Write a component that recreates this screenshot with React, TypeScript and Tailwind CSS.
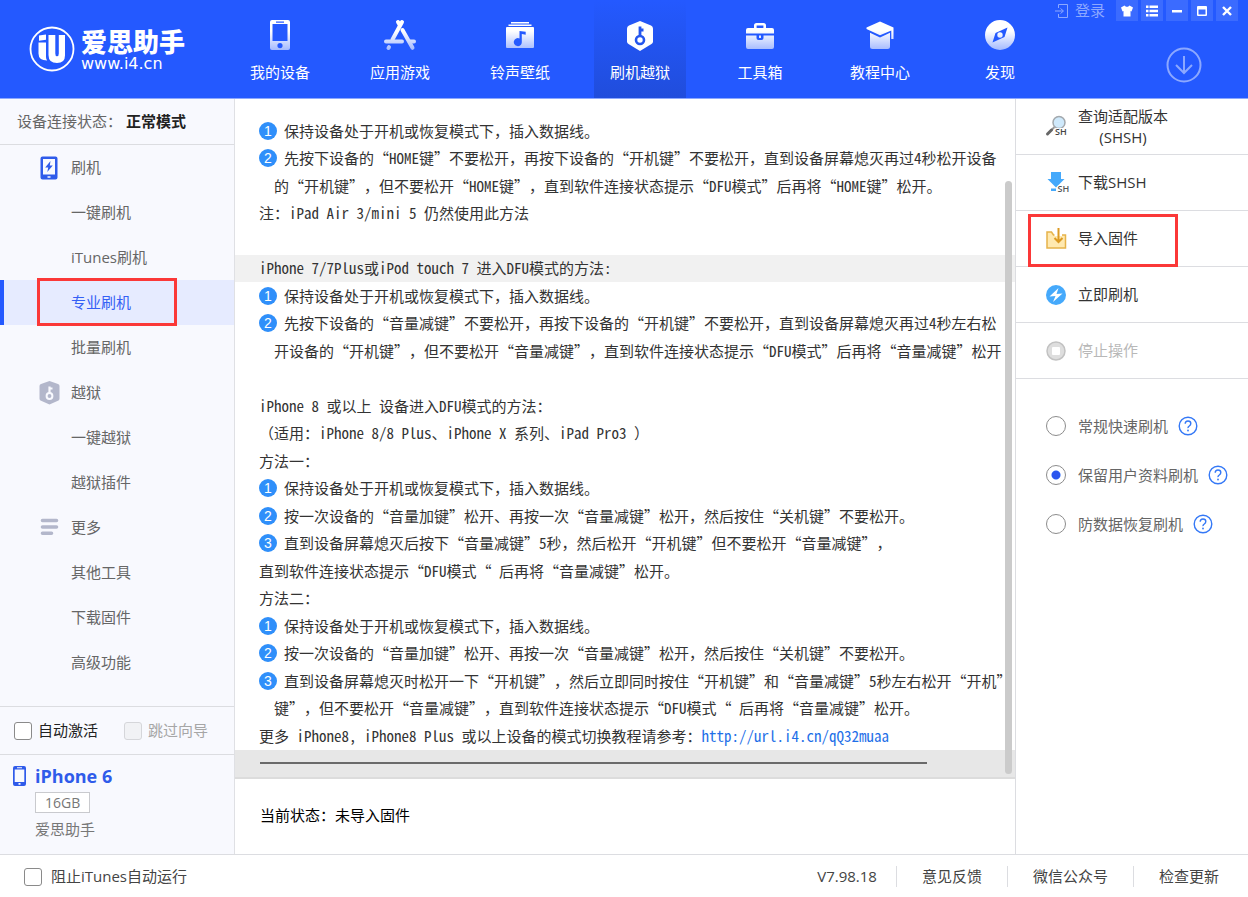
import type { ReactNode } from "react";

const uiFont = "font-['Open_Sans','Noto_Sans_CJK_SC',sans-serif]";
const docFont = "font-['Noto_Sans_Mono_CJK_SC','Noto_Sans_CJK_SC',monospace]";

function NavSvg({ children }: { children: ReactNode }) {
  return (
    <svg viewBox="0 0 36 36" className="size-9" fill="url(#navFade)" aria-hidden="true">
      {children}
    </svg>
  );
}

const navItems: { label: string; active?: boolean; icon: ReactNode }[] = [
  {
    label: "我的设备",
    icon: (
      <NavSvg>
        <path
          fillRule="evenodd"
          d="M10 3h16a2 2 0 0 1 2 2v26a2 2 0 0 1-2 2H10a2 2 0 0 1-2-2V5a2 2 0 0 1 2-2Zm.5 4v17h15V7ZM14 4.5v1.2h8V4.5ZM18 26a2.6 2.6 0 1 0 0 5.200a2.600 2.600 0 0 0 0-5.200Z"
        />
      </NavSvg>
    ),
  },
  {
    label: "应用游戏",
    icon: (
      <NavSvg>
        <g fill="none" stroke="url(#navFade)" strokeWidth="4" strokeLinecap="round">
          <path d="M20 5 10.500 22.500" />
          <path d="M6.500 31 7 30.200" />
          <path d="M16 5 17.500 7.500M20.500 13 30.500 30.800" />
          <path d="M4 24.500 20 24.600M28 24.500h4" />
        </g>
      </NavSvg>
    ),
  },
  {
    label: "铃声壁纸",
    icon: (
      <NavSvg>
        <rect x="9" y="5" width="18" height="1.500" />
        <rect x="6.500" y="7.500" width="23" height="1.500" />
        <path
          fillRule="evenodd"
          d="M5 10h26a1 1 0 0 1 1 1v19a1 1 0 0 1-1 1H5a1 1 0 0 1-1-1V11a1 1 0 0 1 1-1Zm12.500 4v7.500a4 4 0 1 0 2.300 3.600V17l3.900.800V14.800Z"
        />
      </NavSvg>
    ),
  },
  {
    label: "刷机越狱",
    active: true,
    icon: (
      <svg viewBox="0 0 36 36" className="size-9" aria-hidden="true">
        <path fill="#fff" d="M18 4 29 8.500Q31 9.400 31 11.500v13q0 1.600-1.500 2.600L18 34 6.500 27.100Q5 26 5 24.500v-13Q5 9.400 7 8.500Z" />
        <circle cx="18" cy="23" r="4" fill="none" stroke="#2456ee" strokeWidth="2.600" />
        <path d="M18 19V9.500M18 13h3.500" fill="none" stroke="#2456ee" strokeWidth="2.800" />
      </svg>
    ),
  },
  {
    label: "工具箱",
    icon: (
      <NavSvg>
        <path
          fillRule="evenodd"
          d="M12 11V8.500A2.500 2.500 0 0 1 14.500 6h7A2.500 2.500 0 0 1 24 8.500V11h6a2 2 0 0 1 2 2v3.500H4V13a2 2 0 0 1 2-2Zm2.600 0h6.800V8.600h-6.800Z"
        />
        <path
          fillRule="evenodd"
          d="M4 18.500h10.500V21a2 2 0 0 0 2 2h3a2 2 0 0 0 2-2v-2.500H32V30a2 2 0 0 1-2 2H6a2 2 0 0 1-2-2Zm13 0h2V21h-2Z"
        />
      </NavSvg>
    ),
  },
  {
    label: "教程中心",
    icon: (
      <NavSvg>
        <path d="M18 4.500 31.500 10.500V22H29.300V13.500L18 18.300 4.500 12v-1.500Z" />
        <path d="M8 15.800 18 20.600 28 15.800V29.500a2.500 2.500 0 0 1-2.500 2.500h-15A2.500 2.500 0 0 1 8 29.500Z" />
      </NavSvg>
    ),
  },
  {
    label: "发现",
    icon: (
      <NavSvg>
        <path
          fillRule="evenodd"
          d="M18 3a15 15 0 1 0 0 30a15 15 0 0 0 0-30Zm7.500 7.500-3 9.500-12 5.500 3-9.500ZM18 15.300a2.700 2.700 0 1 0 0 5.400a2.700 2.700 0 0 0 0-5.400Z"
        />
      </NavSvg>
    ),
  },
];

const windowButtons: { label: string; icon: ReactNode }[] = [
  { label: "换肤", icon: <path d="M4.500 1.500 6 2.700h2L9.500 1.500 13 3.500 11.500 7.500l-1-.5V12.500h-7V7L2.500 7.500 1 3.500Z" /> },
  { label: "菜单", icon: <path d="M1 1.500h2.500V4H1Zm3.500 0H13V4H4.500ZM1 5.700h2.500v2.500H1Zm3.500 0H13v2.500H4.500ZM1 10h2.500v2.500H1Zm3.500 0H13v2.500H4.500Z" /> },
  { label: "最小化", icon: <path d="M2 6h10v2.500H2Z" /> },
  { label: "最大化", icon: <path fillRule="evenodd" d="M3 2h8a1 1 0 0 1 1 1v8a1 1 0 0 1-1 1H3a1 1 0 0 1-1-1V3a1 1 0 0 1 1-1Zm.500 3.500v5h7v-5Z" /> },
  { label: "关闭", icon: <path d="m3 3 8 8m0-8-8 8" stroke="#fff" strokeWidth="2.400" /> },
];

function Header() {
  return (
    <header className="flex h-[99px] shrink-0 border-b border-[#8ca8ff] bg-[#2459ff] text-white">
      <svg className="absolute size-0" aria-hidden="true">
        <defs>
          <linearGradient id="navFade" gradientUnits="userSpaceOnUse" x1="0" y1="14" x2="0" y2="34">
            <stop offset="0" stopColor="#fff" />
            <stop offset="1" stopColor="#9fb6ff" />
          </linearGradient>
        </defs>
      </svg>
      <div className="flex w-[234px] shrink-0 gap-1.5 pt-[26px] pl-[29px]">
        <svg viewBox="0 0 46 46" className="size-[46px]" aria-label="i4" role="img">
          <circle cx="23" cy="23" r="21.500" fill="none" stroke="#fff" strokeWidth="1.800" />
          <path fill="#fff" d="M10 9.500 17 8.500v5.200l-7 1ZM9.500 16.500H17V31q0 2 1.200 3.500Q9.500 34.500 9.500 27.500Z" />
          <path fill="#fff" d="M19.500 9h6.800v18.500q0 2.800 1.700 2.800 1.800 0 1.800-2.800V9H36v20.500q0 7.500-8 7.500-8.500 0-8.500-8Z" />
        </svg>
        <div className="font-['DejaVu_Sans','Noto_Sans_CJK_SC',sans-serif]">
          <div className="font-['Noto_Sans_CJK_SC',sans-serif] text-[26px] leading-[29px] font-black">爱思助手</div>
          <div className="text-base leading-[18px]">www.i4.cn</div>
        </div>
      </div>
      <nav className="flex gap-7">
        {navItems.map((item) => (
          <button
            key={item.label}
            className={
              item.active
                ? "flex w-[92px] flex-col items-center gap-[9px] bg-linear-to-b from-[#2459ff] to-[#204ddc] pt-[17px]"
                : "flex w-[92px] flex-col items-center gap-[9px] pt-[17px]"
            }
          >
            {item.icon}
            <span className="leading-5">{item.label}</span>
          </button>
        ))}
      </nav>
      <div className="ml-auto flex flex-col items-end gap-[26px] pr-2.5">
        <div className="flex gap-[3px]">
          <button className="mr-2 flex h-[21px] items-center gap-1.5 text-[#8ca8ff]">
            <svg viewBox="0 0 14 14" className="size-3.5" fill="none" stroke="currentColor" aria-hidden="true">
              <path d="M3.500 4V.500h9v13h-9V10M0 7h8M5.500 4.500 8.500 7 5.500 9.500" />
            </svg>
            登录
          </button>
          {windowButtons.map((b) => (
            <button key={b.label} aria-label={b.label} className="flex h-[21px] w-[22px] items-center justify-center bg-[#3b6bff]">
              <svg viewBox="0 0 14 14" className="size-3.5" fill="#fff" aria-hidden="true">
                {b.icon}
              </svg>
            </button>
          ))}
        </div>
        <button aria-label="下载" className="mr-9">
          <svg viewBox="0 0 36 36" className="size-9" fill="none" stroke="#8ca8ff" strokeWidth="2" aria-hidden="true">
            <circle cx="18" cy="18" r="16.500" />
            <path d="M18 9v17M10 18l8 8 8-8" />
          </svg>
        </button>
      </div>
    </header>
  );
}

function Highlight({ className }: { className: string }) {
  return <span className={"pointer-events-none absolute border-3 border-[#fb3838] " + className} />;
}

const flashIcon = (
  <svg viewBox="0 0 24 24" className="size-6" aria-hidden="true">
    <path
      fill="#2f5bea"
      fillRule="evenodd"
      d="M5.500.500h13a2 2 0 0 1 2 2v19a2 2 0 0 1-2 2h-13a2 2 0 0 1-2-2v-19a2 2 0 0 1 2-2ZM6 3v15.500h12V3Zm4.500 17.200v1.600h3v-1.600Z"
    />
    <path fill="#2f5bea" d="m13.500 5-5.300 6.500h3L10.300 16l5.500-6.500h-3Z" />
  </svg>
);
const shieldIcon = (
  <svg viewBox="0 0 24 24" className="size-6" aria-hidden="true">
    <path fill="#b3b7cb" d="M12.500 0 21 3q1.500.600 1.500 2v12.500q0 1.300-1 2L12.500 23.500 3.500 19.500q-1-.700-1-2V5Q2.500 3.500 4 3Z" />
    <circle cx="12.500" cy="15" r="2.900" fill="none" stroke="#f8f9fe" strokeWidth="2" />
    <path d="M12.500 12V5.500M12.500 7.500h3" stroke="#f8f9fe" strokeWidth="2.200" fill="none" />
  </svg>
);
const listIcon = (
  <svg viewBox="0 0 24 24" className="size-6" stroke="#b3b7cb" strokeWidth="3.600" strokeLinecap="round" aria-hidden="true">
    <path d="M5.500 4.500h14M5.500 11h14M5.500 17.300h9" />
  </svg>
);

const menu: { label: string; icon?: ReactNode; active?: boolean }[] = [
  { label: "刷机", icon: flashIcon },
  { label: "一键刷机" },
  { label: "iTunes刷机" },
  { label: "专业刷机", active: true },
  { label: "批量刷机" },
  { label: "越狱", icon: shieldIcon },
  { label: "一键越狱" },
  { label: "越狱插件" },
  { label: "更多", icon: listIcon },
  { label: "其他工具" },
  { label: "下载固件" },
  { label: "高级功能" },
];

const checkbox =
  "size-[18px] appearance-none rounded-[3px] border border-[#8a8a8a] bg-white checked:bg-[#2459ff] disabled:border-[#d5d6da] disabled:bg-[#f1f2f5]";

function Sidebar() {
  return (
    <aside className="flex w-[235px] shrink-0 flex-col border-r border-[#dfe0e4] bg-[#f8f9fe]">
      <div className="flex h-[46px] items-center gap-1 border-b border-[#dcdde1] pl-[17px] text-[#666]">
        设备连接状态：<strong className="text-[#222]">正常模式</strong>
      </div>
      <nav className="flex-1 pb-5">
        {menu.map((item) => (
          <button
            key={item.label}
            className={
              item.active
                ? "relative flex h-[45px] w-full items-center gap-2.5 border-l-4 border-[#2459ff] bg-[#e6ebff] pl-[33px] text-[#3560f5]"
                : "flex h-[45px] w-full items-center gap-2.5 pl-[37px] text-[#666]"
            }
          >
            <span className="size-6">{item.icon}</span>
            {item.label}
            {item.active && <Highlight className="-top-0.5 -bottom-px left-[33px] w-[140px]" />}
          </button>
        ))}
      </nav>
      <div className="flex h-[49px] items-center gap-[26px] border-y border-[#dcdde1] pl-3.5">
        <label className="flex items-center gap-1.5 text-[#222]">
          <input type="checkbox" className={checkbox} />
          自动激活
        </label>
        <label className="flex items-center gap-1.5 text-[#a6a6a6]">
          <input type="checkbox" disabled className={checkbox} />
          跳过向导
        </label>
      </div>
      <div className="flex h-[99px] gap-2 pt-2.5 pl-3">
        <svg viewBox="0 0 15 22" className="h-[22px] w-[15px]" aria-hidden="true">
          <path
            fill="#2f5bea"
            fillRule="evenodd"
            d="M3 1h9a2 2 0 0 1 2 2v16a2 2 0 0 1-2 2H3a2 2 0 0 1-2-2V3a2 2 0 0 1 2-2Zm-.300 3.500V17h9.600V4.500ZM5 2.300v.900h5v-.900ZM6.500 18v1.700h2V18Z"
          />
        </svg>
        <div className="flex flex-col items-start text-[#777]">
          <strong className="text-lg leading-[22px] text-[#2f5bea]">iPhone 6</strong>
          <span className="mt-[5px] flex h-[21px] items-center border border-[#c9cace] bg-white px-[9px] text-sm leading-4">16GB</span>
          <span className="mt-1.5 leading-5">爱思助手</span>
        </div>
      </div>
    </aside>
  );
}

type Line = { n?: number; text?: string; indent?: boolean; shade?: boolean; link?: string };

const lines: Line[] = [
  { n: 1, text: "保持设备处于开机或恢复模式下，插入数据线。" },
  { n: 2, text: "先按下设备的“HOME键”不要松开，再按下设备的“开机键”不要松开，直到设备屏幕熄灭再过4秒松开设备" },
  { indent: true, text: "的“开机键”，但不要松开“HOME键”，直到软件连接状态提示“DFU模式”后再将“HOME键”松开。" },
  { text: "注：iPad Air 3/mini 5 仍然使用此方法" },
  {},
  { shade: true, text: "iPhone 7/7Plus或iPod touch 7 进入DFU模式的方法:" },
  { n: 1, text: "保持设备处于开机或恢复模式下，插入数据线。" },
  { n: 2, text: "先按下设备的“音量减键”不要松开，再按下设备的“开机键”不要松开，直到设备屏幕熄灭再过4秒左右松" },
  { indent: true, text: "开设备的“开机键”，但不要松开“音量减键”，直到软件连接状态提示“DFU模式”后再将“音量减键”松开" },
  {},
  { text: "iPhone 8 或以上 设备进入DFU模式的方法：" },
  { text: "（适用：iPhone 8/8 Plus、iPhone X 系列、iPad Pro3 ）" },
  { text: "方法一：" },
  { n: 1, text: "保持设备处于开机或恢复模式下，插入数据线。" },
  { n: 2, text: "按一次设备的“音量加键”松开、再按一次“音量减键”松开，然后按住“关机键”不要松开。" },
  { n: 3, text: "直到设备屏幕熄灭后按下“音量减键”5秒，然后松开“开机键”但不要松开“音量减键”，" },
  { text: "直到软件连接状态提示“DFU模式“ 后再将“音量减键”松开。" },
  { text: "方法二：" },
  { n: 1, text: "保持设备处于开机或恢复模式下，插入数据线。" },
  { n: 2, text: "按一次设备的“音量加键”松开、再按一次“音量减键”松开，然后按住“关机键”不要松开。" },
  { n: 3, text: "直到设备屏幕熄灭时松开一下“开机键”，然后立即同时按住“开机键”和“音量减键”5秒左右松开“开机”" },
  { indent: true, text: "键”，但不要松开“音量减键”，直到软件连接状态提示“DFU模式“ 后再将“音量减键”松开。" },
  { text: "更多 iPhone8, iPhone8 Plus 或以上设备的模式切换教程请参考：", link: "http://url.i4.cn/qQ32muaa" },
];

function rowClass(line: Line) {
  if (line.shade) return "flex min-h-6 flex-1 items-center bg-[#f1f1f1] pl-6";
  if (line.indent) return "flex min-h-6 flex-1 items-center pl-[39px]";
  return "flex min-h-6 flex-1 items-center pl-6";
}

function Instructions() {
  return (
    <main className="flex min-w-0 flex-1 flex-col">
      <div
        className={
          "relative flex flex-1 flex-col overflow-hidden border-b-2 border-[#dcdcdc] pt-[18px] leading-5 whitespace-pre text-[#333] [text-spacing-trim:space-all] " +
          docFont
        }
      >
        {lines.map((line, i) => (
          <div key={i} className={rowClass(line)}>
            {line.n && (
              <span className="mr-[7px] flex size-[18px] shrink-0 items-center justify-center rounded-full bg-[#2f8ffa] font-['Liberation_Sans',sans-serif] text-sm leading-none text-white">
                {line.n}
              </span>
            )}
            <span>{line.text}</span>
            {line.link && (
              <a href={line.link} className="text-[#1e6fe8]">
                {line.link}
              </a>
            )}
          </div>
        ))}
        <div className="flex min-h-6 flex-1 items-center bg-[#e7e7e7] pr-[88px] pl-[25px]">
          <hr className="w-full border-t-2 border-[#6a6a6a]" />
        </div>
        <div className="absolute top-[82px] right-[3px] bottom-[3px] w-[7px] rounded-full bg-[#cbcbcb]" />
      </div>
      <div className="flex h-[75px] items-center pb-0.5 pl-[25px] text-black">当前状态：未导入固件</div>
    </main>
  );
}

const actions: { lines: string[]; icon: ReactNode; disabled?: boolean; marked?: boolean }[] = [
  {
    lines: ["查询适配版本", "(SHSH)"],
    icon: (
      <>
        <path d="m8.500 11-3 3" stroke="#9a9a9a" strokeWidth="2" />
        <path d="m5.500 14-4 4" stroke="#666" strokeWidth="3" strokeLinecap="round" />
        <circle cx="13" cy="6.500" r="6" fill="#cfe9fb" stroke="#a3a9ae" strokeWidth="1.500" />
        <text x="9" y="19" fontSize="9" fontWeight="600" fill="#444" stroke="#fff" strokeWidth="2" paintOrder="stroke">SH</text>
      </>
    ),
  },
  {
    lines: ["下载SHSH"],
    icon: (
      <>
        <path d="M5 0h10v7h3.500l-8.500 8.500L1.500 7H5Z" fill="#45a9fb" />
        <path d="M5 16.500h5V19H5Z" fill="#45a9fb" />
        <text x="11.500" y="20" fontSize="9" fontWeight="600" fill="#555" stroke="#fff" strokeWidth="2" paintOrder="stroke">SH</text>
      </>
    ),
  },
  {
    lines: ["导入固件"],
    marked: true,
    icon: (
      <>
        <path d="M1 4h4.500l2 3H19.500v13H1Z" fill="#ffe9b0" stroke="#e6b34a" strokeWidth="1.500" />
        <path d="M8.500 8V6H16v2Z" fill="#fff" />
        <path d="M12.500 0v14M8.500 10l4 4 4-4" fill="none" stroke="#dc9a22" strokeWidth="2" />
      </>
    ),
  },
  {
    lines: ["立即刷机"],
    icon: (
      <>
        <circle cx="10" cy="11" r="10" fill="#45a9fb" />
        <path d="M12.500 4 3.500 12.500l6-.500L7 18l9.500-8.500-6 .500Z" fill="#fff" />
      </>
    ),
  },
  {
    lines: ["停止操作"],
    disabled: true,
    icon: (
      <>
        <circle cx="10" cy="11" r="9" fill="#dedede" stroke="#c2c2c2" strokeWidth="1.500" />
        <rect x="6" y="7" width="8" height="8" rx="1" fill="#fff" />
      </>
    ),
  },
];

const modes = ["常规快速刷机", "保留用户资料刷机", "防数据恢复刷机"];

function ActionPanel() {
  return (
    <aside className="w-[233px] shrink-0 border-l border-[#dcdde1]">
      {actions.map((a) => (
        <button
          key={a.lines[0]}
          disabled={a.disabled}
          className="relative flex h-14 w-full items-center gap-2 border-b border-[#dcdde1] pl-[30px] text-[#333] disabled:text-[#b8b8b8]"
        >
          <svg viewBox="0 0 24 22" className="h-[22px] w-6 overflow-visible" aria-hidden="true">
            {a.icon}
          </svg>
          <span className="leading-[21px]">
            {a.lines.map((l) => (
              <span key={l} className="block">
                {l}
              </span>
            ))}
          </span>
          {a.marked && <Highlight className="top-[3px] left-3 h-[53px] w-[150px]" />}
        </button>
      ))}
      <fieldset className="flex flex-col gap-[25px] pt-[35px] pl-[30px] text-[#666]">
        {modes.map((m, i) => (
          <div key={m} className="flex h-6 items-center gap-2.5">
            <label className="flex items-center gap-3">
              <input
                type="radio"
                name="mode"
                defaultChecked={i === 1}
                className="size-5 appearance-none rounded-full border border-[#8c8c8c] bg-white checked:bg-radial checked:from-[#2b56ee] checked:from-[4px] checked:to-white checked:to-[5px]"
              />
              {m}
            </label>
            <button aria-label={m + "说明"}>
              <svg viewBox="0 0 20 20" className="size-5" fill="none" stroke="#3478f6" strokeWidth="1.400" aria-hidden="true">
                <circle cx="10" cy="10" r="8.800" />
                <path d="M7.200 7.800Q7.200 5 10 5t2.800 2.600Q12.800 9 11.300 10T10 12.200" />
                <circle cx="10" cy="14.500" r=".900" fill="#3478f6" stroke="none" />
              </svg>
            </button>
          </div>
        ))}
      </fieldset>
    </aside>
  );
}

function Footer() {
  return (
    <footer className="flex h-[43px] shrink-0 items-center border-t border-[#dcdde1] pt-px pr-[29px] pl-6 text-[#444]">
      <label className="flex items-center gap-[9px]">
        <input type="checkbox" className={checkbox} />
        阻止iTunes自动运行
      </label>
      <span className="mr-[19px] ml-auto">V7.98.18</span>
      <a href="#feedback" className="border-l border-[#dcdde1] px-[25px]">意见反馈</a>
      <a href="#wechat" className="border-l border-[#dcdde1] px-[25px]">微信公众号</a>
      <a href="#update" className="border-l border-[#dcdde1] pl-[25px]">检查更新</a>
    </footer>
  );
}

export default function App() {
  return (
    <div lang="zh-CN" className={"flex min-h-screen flex-col bg-white text-[15px] leading-[21px] " + uiFont}>
      <Header />
      <div className="flex flex-1">
        <Sidebar />
        <Instructions />
        <ActionPanel />
      </div>
      <Footer />
    </div>
  );
}
